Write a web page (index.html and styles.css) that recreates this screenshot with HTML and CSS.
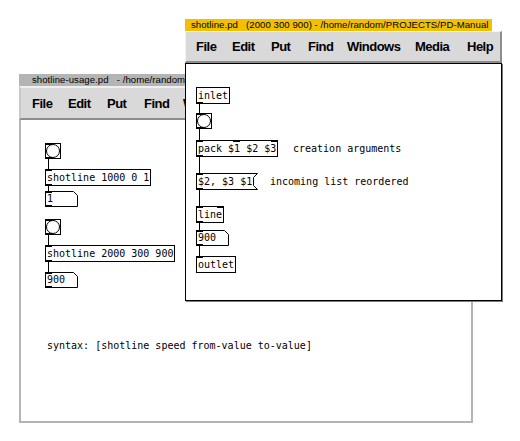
FILE: index.html
```html
<!DOCTYPE html>
<html>
<head>
<meta charset="utf-8">
<link rel="stylesheet" href="styles.css">
</head>
<body>
<div class="win back">
  <div class="title back-title"><span>shotline-usage.pd   - /home/random/PROJECTS/PD-Manual</span></div>
  <div class="menubar back-menu">
    <span class="m m-file">File</span><span class="m m-edit">Edit</span><span class="m m-put">Put</span><span class="m m-find">Find</span><span class="m m-win">Windows</span>
  </div>
  <div class="canvas back-canvas">
    <svg class="wires" width="450" height="303"><g stroke="#000" stroke-width="1"><line x1="27.5" y1="39" x2="27.5" y2="49"/><line x1="27.5" y1="66" x2="27.5" y2="71"/><line x1="27.5" y1="115" x2="27.5" y2="125"/><line x1="27.5" y1="142" x2="27.5" y2="152"/></g></svg>
    <div class="bng b1"><i class="io in"></i><i class="io out"></i></div>
    <div class="obj s1">shotline 1000 0 1<i class="io in"></i><i class="io out"></i></div>
    <div class="num n1"><svg width="33" height="16"><polygon points="0.5,0.5 28.5,0.5 32.5,4.5 32.5,15.5 0.5,15.5" fill="#fff" stroke="#000"/></svg><span>1</span><i class="io in"></i><i class="io out"></i></div>
    <div class="bng b2"><i class="io in"></i><i class="io out"></i></div>
    <div class="obj s2">shotline 2000 300 900<i class="io in"></i><i class="io out"></i></div>
    <div class="num n2"><svg width="33" height="16"><polygon points="0.5,0.5 28.5,0.5 32.5,4.5 32.5,15.5 0.5,15.5" fill="#fff" stroke="#000"/></svg><span>900</span><i class="io in"></i><i class="io out"></i></div>
    <div class="cmt c-syntax">syntax: [shotline speed from-value to-value]</div>
  </div>
</div>

<div class="win front">
  <div class="title front-title"><span>shotline.pd   (2000 300 900) - /home/random/PROJECTS/PD-Manual</span></div>
  <div class="menubar front-menu">
    <span class="m m-file">File</span><span class="m m-edit">Edit</span><span class="m m-put">Put</span><span class="m m-find">Find</span><span class="m m-win">Windows</span><span class="m m-media">Media</span><span class="m">Help</span>
  </div>
  <div class="canvas front-canvas">
    <svg class="wires" width="315" height="236"><g stroke="#000" stroke-width="1"><line x1="13.5" y1="40" x2="13.5" y2="49"/><line x1="13.5" y1="65" x2="13.5" y2="76"/><line x1="13.5" y1="93" x2="13.5" y2="109"/><line x1="13.5" y1="126" x2="13.5" y2="142"/><line x1="13.5" y1="159" x2="13.5" y2="166"/><line x1="13.5" y1="182" x2="13.5" y2="192"/></g></svg>
    <div class="obj f-inlet">inlet<i class="io out"></i></div>
    <div class="bng f-bng"><i class="io in"></i><i class="io out"></i></div>
    <div class="obj f-pack">pack $1 $2 $3<i class="io in"></i><i class="io in mid"></i><i class="io in right"></i><i class="io out"></i></div>
    <div class="cmt f-c1">creation arguments</div>
    <div class="msg f-msg"><svg width="62" height="17"><polygon points="0.5,0.5 61.5,0.5 57.5,4.5 57.5,12.5 61.5,16.5 0.5,16.5" fill="#fff" stroke="#000"/></svg><span>$2, $3 $1</span><i class="io in"></i><i class="io out"></i></div>
    <div class="cmt f-c2">incoming list reordered</div>
    <div class="obj f-line">line<i class="io in"></i><i class="io in right"></i><i class="io out"></i></div>
    <div class="num f-num"><svg width="33" height="16"><polygon points="0.5,0.5 28.5,0.5 32.5,4.5 32.5,15.5 0.5,15.5" fill="#fff" stroke="#000"/></svg><span>900</span><i class="io in"></i><i class="io out"></i></div>
    <div class="obj f-outlet">outlet<i class="io in"></i></div>
  </div>
</div>
</body>
</html>
```

FILE: styles.css
```css
html, body {
  margin: 0;
  padding: 0;
  background: #fff;
}
body {
  width: 520px;
  height: 441px;
  overflow: hidden;
  position: relative;
  font-family: "Liberation Sans", Arial, sans-serif;
}

.win {
  position: absolute;
  display: flex;
  flex-direction: column;
}
.back {
  left: 19px;
  top: 74px;
  width: 454px;
  height: 349px;
}
.front {
  left: 185px;
  top: 19px;
  width: 317px;
  height: 282px;
}

/* title tabs */
.title {
  height: 12px;
  flex: none;
  display: flex;
}
.title span {
  display: block;
  height: 12px;
  font-size: 9.6px;
  line-height: 12px;
  white-space: pre;
  color: #000;
  letter-spacing: 0.05px;
}
.back-title span {
  background: #b4b4b4;
  padding: 0 10px 0 13px;
}
.front-title span {
  background: #f2c000;
  padding: 0 4px 0 6px;
}

/* menu bars */
.menubar {
  flex: none;
  display: flex;
  align-items: center;
  background: #d9d9d9;
  box-sizing: border-box;
  font-weight: bold;
  font-size: 13px;
  letter-spacing: -0.5px;
  color: #000;
  white-space: nowrap;
  overflow: hidden;
}
.back-menu {
  height: 34px;
  border-top: 2px solid #efefef;
  border-bottom: 2px solid #8c8c8c;
  border-left: 2px solid #c8c8c8;
  padding-left: 11px;
}
.front-menu {
  height: 32px;
  border-top: 1px solid #f4f4f4;
  border-left: 1px solid #f4f4f4;
  border-right: 2px solid #8c8c8c;
  border-bottom: 2px solid #8c8c8c;
  padding-left: 10px;
}
.m { display: block; flex: none; }
.m-file { width: 36px; }
.m-edit { width: 39px; }
.m-put { width: 37px; }
.m-find { width: 39px; }
.m-win { width: 68px; }
.m-media { width: 52px; }

/* canvases */
.canvas {
  flex: 1;
  position: relative;
  background: #fff;
  overflow: hidden;
}
.back-canvas {
  border: 2px solid #b4b4b4;
  border-top: none;
}
.front-canvas {
  border: 1px solid #000;
  box-shadow: 1px 1px 0 #7a7a7a;
}
.wires {
  position: absolute;
  left: 0;
  top: 0;
}

/* patch objects */
.obj, .cmt, .num span, .msg span {
  font-family: "DejaVu Sans Mono", "Liberation Mono", monospace;
  font-size: 10px;
  white-space: pre;
  color: #000;
}
.obj {
  position: absolute;
  box-sizing: border-box;
  height: 17px;
  border: 1px solid #000;
  background: #fff;
  padding: 0 1px;
  line-height: 15px;
}
.cmt {
  position: absolute;
  line-height: 17px;
  padding: 0 2px;
}
.num, .msg {
  position: absolute;
}
.num { width: 33px; height: 16px; }
.msg { width: 62px; height: 17px; }
.num svg, .msg svg {
  position: absolute;
  left: 0;
  top: 0;
}
.num span, .msg span {
  position: absolute;
  left: 2px;
  top: 0;
  line-height: 17px;
}
.num span { line-height: 16px; }

.bng {
  position: absolute;
  box-sizing: border-box;
  width: 16px;
  height: 16px;
  border: 1px solid #000;
  background: #fff;
}
.bng::after {
  content: "";
  position: absolute;
  left: 0;
  top: 0;
  width: 12px;
  height: 12px;
  border: 1px solid #000;
  border-radius: 50%;
}

.io {
  position: absolute;
  width: 7px;
  height: 2px;
  background: #000;
  left: -1px;
}
.num .io, .msg .io { left: 0; }
.io.in { top: -1px; }
.num .io.in, .msg .io.in { top: 0; }
.io.out { bottom: -1px; }
.num .io.out, .msg .io.out { bottom: 0; }
.io.mid { left: 36px; }
.io.right { left: auto; right: -1px; }

/* front placements (origin 186,64) */
.f-inlet { left: 10px; top: 23px; width: 34px; }
.f-bng { left: 10px; top: 49px; }
.f-pack { left: 10px; top: 76px; width: 82px; }
.f-c1 { left: 105px; top: 76px; }
.f-msg { left: 10px; top: 109px; }
.f-c2 { left: 82px; top: 109px; }
.f-line { left: 10px; top: 142px; width: 28px; }
.f-num { left: 10px; top: 166px; }
.f-outlet { left: 10px; top: 192px; width: 40px; }

/* back placements (origin 21,120) */
.b1 { left: 24px; top: 23px; }
.s1 { left: 24px; top: 49px; width: 106px; }
.n1 { left: 24px; top: 71px; }
.b2 { left: 24px; top: 99px; }
.s2 { left: 24px; top: 125px; width: 130px; }
.n2 { left: 24px; top: 152px; }
.c-syntax { left: 24px; top: 217px; }
```
